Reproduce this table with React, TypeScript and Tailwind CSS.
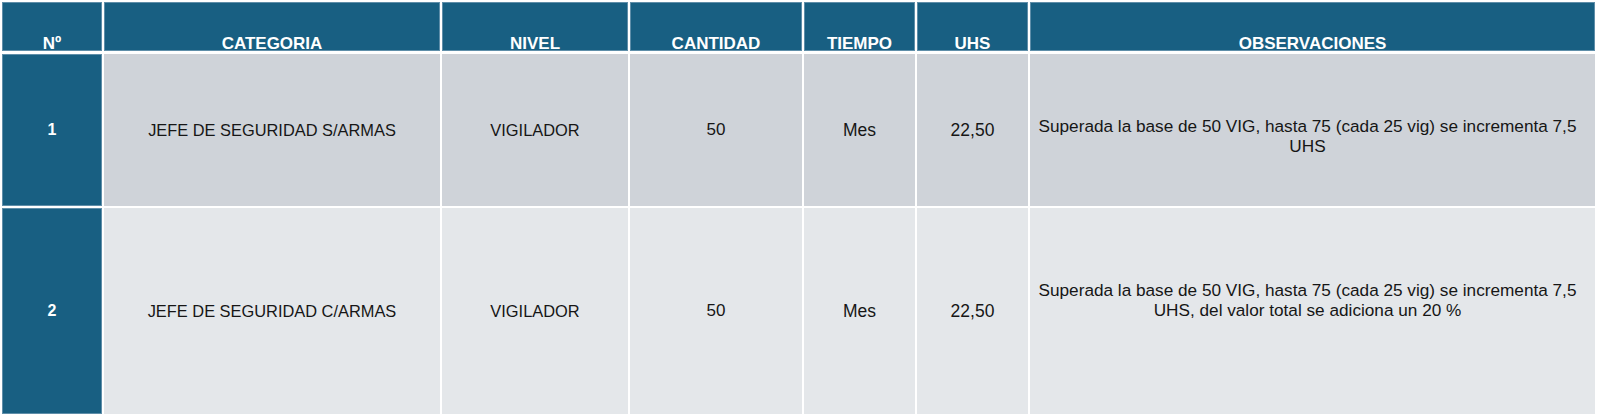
import React from 'react';

interface Row {
  num: string;
  categoria: string;
  nivel: string;
  cantidad: string;
  tiempo: string;
  uhs: string;
  obs: string[];
}

const rows: Row[] = [
  {
    num: '1',
    categoria: 'JEFE DE SEGURIDAD S/ARMAS',
    nivel: 'VIGILADOR',
    cantidad: '50',
    tiempo: 'Mes',
    uhs: '22,50',
    obs: ['Superada la base de 50 VIG, hasta 75 (cada 25 vig) se incrementa 7,5', 'UHS']
  },
  {
    num: '2',
    categoria: 'JEFE DE SEGURIDAD C/ARMAS',
    nivel: 'VIGILADOR',
    cantidad: '50',
    tiempo: 'Mes',
    uhs: '22,50',
    obs: ['Superada la base de 50 VIG, hasta 75 (cada 25 vig) se incrementa 7,5', 'UHS, del valor total se adiciona un 20 %']
  }
];

const headers = ['Nº', 'CATEGORIA', 'NIVEL', 'CANTIDAD', 'TIEMPO', 'UHS', 'OBSERVACIONES'];

const cols = 'grid grid-cols-[100px_336px_186px_172px_111px_111px_565px] gap-x-[2px]';

export default function App() {
  return (
    <div className="w-[1600px] h-[416px] bg-white pt-[2px] pl-[2px] font-['Liberation_Sans',Arial,sans-serif] overflow-hidden">
      {/* Header */}
      <div className={`${cols} h-[49px] mb-[3px]`}>
        {headers.map(h => (
          <div
            key={h}
            className="bg-[#185f82] border border-[#5f8ea9] flex items-end justify-center text-white font-bold text-[17px] leading-[13px]"
          >
            {h}
          </div>
        ))}
      </div>

      {/* Body */}
      <div className="flex flex-col gap-y-[2px]">
        {rows.map((r, i) => {
          const bg = i === 0 ? 'bg-[#cfd3d9]' : 'bg-[#e4e7ea]';
          const h = i === 0 ? 'h-[152px]' : 'h-[206px]';
          const cell = `${bg} flex items-center justify-center text-center text-[#161616]`;
          return (
            <div key={r.num} className={`${cols} ${h}`}>
              <div className="bg-[#185f82] border border-[#5f8ea9] flex items-center justify-center text-white font-bold text-[16px]">
                {r.num}
              </div>
              <div className={`${cell} text-[16.4px]`}>{r.categoria}</div>
              <div className={`${cell} text-[16.4px]`}>{r.nivel}</div>
              <div className={`${cell} text-[17px]`}>{r.cantidad}</div>
              <div className={`${cell} text-[17.5px]`}>{r.tiempo}</div>
              <div className={`${cell} text-[17.5px]`}>{r.uhs}</div>
              <div className={`${cell} text-[17.2px] pr-[10px]`}>
                <div className={`leading-[20px] ${i === 0 ? 'mt-[12px]' : 'mb-[23px]'}`}>
                  {r.obs.map(line => (
                    <div key={line} className="whitespace-nowrap">{line}</div>
                  ))}
                </div>
              </div>
            </div>
          );
        })}
      </div>
    </div>
  );
}
